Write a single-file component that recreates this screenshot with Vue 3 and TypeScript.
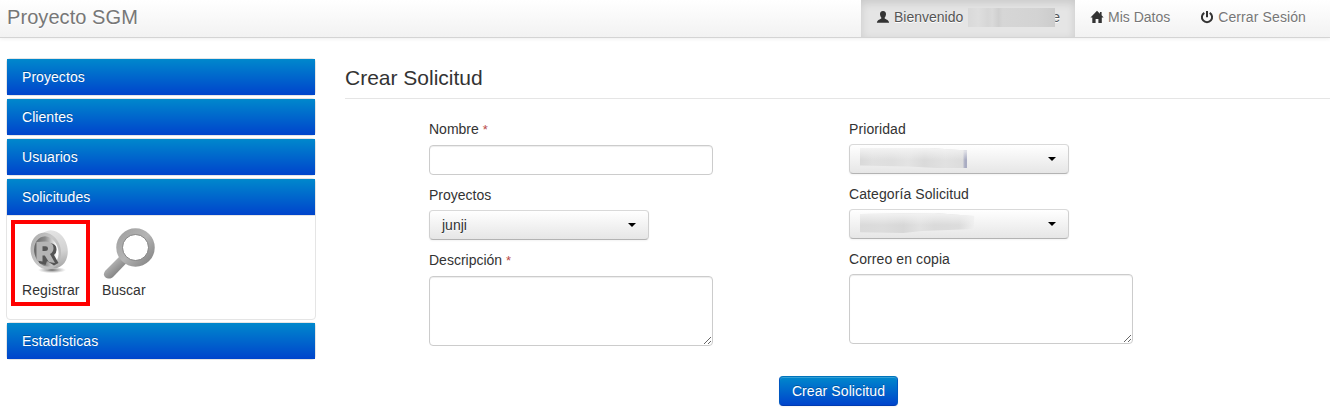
<script setup lang="ts">
const before: string[] = ['Proyectos', 'Clientes', 'Usuarios']
</script>

<template>
  <div class="page">
    <header class="navbar">
      <span class="brand">Proyecto SGM</span>
      <nav class="nav">
        <a class="nav-item active">
          <svg class="glyph" viewBox="0 0 14 14"><path d="M7 1C4.9 1 3.9 2.3 4 4.2C4.1 5.7 4.7 6.9 5.3 7.5V8.6C4.6 9.4 1.1 9.8.9 12.8H13.1C12.9 9.8 9.4 9.4 8.7 8.6V7.5C9.3 6.9 9.9 5.7 10 4.2C10.1 2.3 9.1 1 7 1Z" /></svg>
          <span>Bienvenido</span><span class="hidden-name"></span><span class="tail">e</span>
        </a>
        <a class="nav-item">
          <svg class="glyph" viewBox="0 0 14 14"><path d="M7 .8L.5 7.4H2.3V12.9H5.6V9H8.4V12.9H11.8V7.4H13.6L11.6 5.3V2H9.9V3.7Z" /></svg>
          <span>Mis Datos</span>
        </a>
        <a class="nav-item">
          <svg class="glyph" viewBox="0 0 14 14"><path d="M4.3 2.8A5.1 5.1 0 1 0 9.7 2.8" fill="none" stroke="#333" stroke-width="2" /><path d="M6 1H8V7.3H6Z" /></svg>
          <span class="logout">Cerrar Sesión</span>
        </a>
      </nav>
    </header>

    <div class="columns">
      <aside class="sidebar">
        <section v-for="name in before" :key="name" class="group">
          <h3 class="heading">{{ name }}</h3>
        </section>
        <section class="group">
          <h3 class="heading">Solicitudes</h3>
          <div class="panel">
            <a class="tool selected">
              <svg class="tool-icon" viewBox="0 0 50 50">
                <defs>
                  <linearGradient id="rim" x1="0" y1="0" x2="1" y2="1"><stop offset="0" stop-color="#a8a8a8" /><stop offset=".5" stop-color="#c8c8c8" /><stop offset="1" stop-color="#b4b4b4" /></linearGradient>
                  <linearGradient id="side" x1="0" y1="0" x2="0" y2="1"><stop offset="0" stop-color="#e4e4e4" /><stop offset=".6" stop-color="#d2d2d2" /><stop offset="1" stop-color="#a8a8a8" /></linearGradient>
                  <linearGradient id="well" x1="0" y1="0" x2="1" y2=".3"><stop offset="0" stop-color="#5c5c5c" /><stop offset=".55" stop-color="#8c8c8c" /><stop offset=".85" stop-color="#d5d5d5" /><stop offset="1" stop-color="#fff" /></linearGradient>
                  <radialGradient id="shade"><stop offset="0" stop-color="#666" /><stop offset="1" stop-color="#999" stop-opacity="0" /></radialGradient>
                </defs>
                <ellipse cx="27" cy="43" rx="14" ry="3.2" fill="url(#shade)" />
                <ellipse cx="27.5" cy="22.3" rx="15" ry="19.2" transform="rotate(-14 27.5 22.3)" fill="url(#side)" />
                <ellipse cx="20.8" cy="24" rx="15" ry="18.6" transform="rotate(-14 20.8 24)" fill="url(#rim)" />
                <ellipse cx="21.3" cy="24.4" rx="12" ry="15.2" transform="rotate(-14 21.3 24.4)" fill="url(#well)" />
                <path d="M14 17L25 16Q32 17 31.5 23Q31.5 26 29 28L33.5 36L29 38.5L22 34L20.5 38L14 36Z" fill="#555" />
                <path fill-rule="evenodd" d="M11.5 15L20.5 14.5Q28.5 15 28.5 21Q28.5 25 25 27L30 36L23.8 35L19.8 28.5H17.5V34.5L11.5 33.5ZM17.5 19.2V24H20Q23 24 23 21.5Q23 19.2 20.5 19.2Z" fill="#b4b4b4" />
              </svg>
              <span class="wide">Registrar</span>
            </a>
            <a class="tool search">
              <svg class="tool-icon" viewBox="0 0 52 52">
                <defs>
                  <linearGradient id="lens" x1="0" y1="0" x2="1" y2="1"><stop offset="0" stop-color="#a2a2a2" /><stop offset=".5" stop-color="#b4b4b4" /><stop offset="1" stop-color="#858585" /></linearGradient>
                  <linearGradient id="grip" gradientUnits="userSpaceOnUse" x1="9" y1="35" x2="17" y2="44"><stop offset="0" stop-color="#b5b5b5" /><stop offset="1" stop-color="#858585" /></linearGradient>
                </defs>
                <path d="M17 29L2.5 43.5C-.5 47 1 51 5 51.5C7.500 51.8 9 51 11 49L23.500 36Z" fill="url(#grip)" />
                <circle cx="32.500" cy="20.500" r="16" fill="none" stroke="url(#lens)" stroke-width="6.500" />
                <circle cx="32.500" cy="20.500" r="13" fill="none" stroke="#888" stroke-width="1" />
              </svg>
              <span>Buscar</span>
            </a>
          </div>
        </section>
        <section class="group">
          <h3 class="heading">Estadísticas</h3>
        </section>
      </aside>

      <main class="content">
        <h2 class="legend">Crear Solicitud</h2>
        <form class="form" @submit.prevent>
          <div class="col">
            <label class="label name">Nombre <span class="req">*</span></label>
            <input class="control" type="text" />
            <label class="label">Proyectos</label>
            <button type="button" class="select"><span>junji</span><i class="caret"></i></button>
            <label class="label name">Descripción <span class="req">*</span></label>
            <textarea class="control area"></textarea>
          </div>
          <div class="col">
            <label class="label wide">Prioridad</label>
            <button type="button" class="select"><span class="smudge first"></span><i class="caret"></i></button>
            <label class="label wide">Categoría Solicitud</label>
            <button type="button" class="select"><span class="smudge second"></span><i class="caret"></i></button>
            <label class="label wide">Correo en copia</label>
            <textarea class="control area"></textarea>
          </div>
        </form>
        <button type="button" class="submit">Crear Solicitud</button>
      </main>
    </div>
  </div>
</template>

<style>
body { margin: 0; background: #fff; overflow: hidden; }
</style>

<style scoped>
.page { height: 419px; overflow: hidden; font: 14px/20px "Liberation Sans", Arial, sans-serif; color: #333; }
.page * { box-sizing: border-box; }
.navbar { height: 38px; display: flex; justify-content: space-between; padding: 0 9px 0 7px; border-bottom: 1px solid #d4d4d4; background: linear-gradient(#fff, #f2f2f2); box-shadow: 0 1px 4px rgba(0, 0, 0, .065); }
.brand { font-size: 20px; line-height: 20px; padding-top: 7px; color: #777; letter-spacing: .07px; text-shadow: 0 1px 0 #fff; }
.nav { display: flex; }
.nav-item { display: flex; padding: 7px 15px 10px; color: #777; text-shadow: 0 1px 0 #fff; white-space: nowrap; }
.nav-item.active { width: 214px; color: #555; background: #e5e5e5; box-shadow: inset 0 3px 8px rgba(0, 0, 0, .125); }
.glyph { width: 14px; height: 14px; margin: 3px 4px 0 0; fill: #333; flex: none; }
.logout { letter-spacing: .11px; }
.hidden-name { width: 87px; height: 19px; margin: 1px 0 0 5px; flex: none; background: linear-gradient(90deg, #d9d9d9, #dedede 12%, #d6d6d6 23%, #dadada 28%, #cfcfcf 35%, #d6d6d6 40%, #d3d3d3 80%, #cccccc); }
.tail { margin-left: -3px; clip-path: inset(0 0 0 3px); }
.columns { display: flex; padding: 20px 0 0 6px; }
.sidebar { width: 310px; flex: none; }
.group { border: 1px solid #e5e5e5; border-radius: 4px; margin-bottom: 2px; }
.heading { margin: 0; height: 36px; padding: 8px 15px; font: inherit; letter-spacing: .06px; color: #fff; text-shadow: 0 -1px 0 rgba(0, 0, 0, .25); background: linear-gradient(#08c, #04c); }
.panel { height: 104px; border-top: 1px solid #e5e5e5; padding: 4px; display: flex; }
.tool { display: flex; flex-direction: column; height: 86px; }
.wide { letter-spacing: .09px; }
.tool.selected { width: 79px; border: 4px solid #f00; padding: 0 7px; }
.selected .tool-icon { width: 50px; height: 50px; margin: 3px 0 3px 3px; }
.search { padding-left: 12px; }
.search .tool-icon { width: 52px; height: 52px; margin: 7px 0 1px 1px; }
.content { flex: 1; margin-left: 29px; display: flex; flex-direction: column; }
.legend { margin: 0; height: 41px; font-size: 21px; line-height: 40px; font-weight: normal; border-bottom: 1px solid #e5e5e5; }
.form { display: flex; gap: 136px; padding: 20px 0 0 84px; }
.col { width: 284px; display: flex; flex-direction: column; }
.label { height: 25px; }
.label.name { height: 26px; }
.req { color: #b94a48; font-size: 13px; }
.control { width: 284px; height: 30px; margin: 0 0 10px; padding: 4px 6px; border: 1px solid #ccc; border-radius: 4px; background: #fff; box-shadow: inset 0 1px 1px rgba(0, 0, 0, .075); }
.area { height: 70px; margin: 0; display: block; }
.select { width: 220px; height: 30px; margin: 0 0 10px; padding: 0 12px; display: flex; align-items: center; justify-content: space-between; font: inherit; color: #333; text-shadow: 0 1px 1px rgba(255, 255, 255, .75); border: 1px solid #ccc; border-color: #d9d9d9 #d0d0d0 #b3b3b3; border-radius: 4px; background: linear-gradient(#fff, #e6e6e6); box-shadow: inset 0 1px 0 rgba(255, 255, 255, .2), 0 1px 2px rgba(0, 0, 0, .05); }
.caret { border-top: 4px solid #000; border-left: 4px solid transparent; border-right: 4px solid transparent; }
.smudge { height: 20px; margin: -2px 0 0 -2px; }
.first { width: 107px; clip-path: polygon(0 0, 65% 0, 100% 12%, 100% 100%, 72% 100%, 45% 92%, 0 88%); background: linear-gradient(#f3f3f3, rgba(243, 243, 243, 0) 60%), linear-gradient(90deg, #d9d9d9, #e0e0e0 12%, #dedede 30%, #e3e3e3 45%, #dadada 60%, #e1e1e1 80%, #dcdcdc 96%, #a9acc2 98%); }
.second { width: 124px; clip-path: polygon(0 5%, 60% 0, 92% 15%, 92% 80%, 50% 90%, 35% 100%, 0 96%); background: linear-gradient(#f3f3f3, rgba(243, 243, 243, 0) 60%), linear-gradient(90deg, #dadada, #dcdcdc 18%, #d7d7d7 35%, #e1e1e1 48%, #dadada 60%, #dcdcdc 80%, #efefef 92%); }
.submit { width: 119px; height: 30px; margin: 30px 0 0 434px; padding: 0; font: inherit; letter-spacing: .09px; color: #fff; text-shadow: 0 -1px 0 rgba(0, 0, 0, .25); border: 1px solid; border-color: #0074bb #0057c0 #003bb0; border-radius: 4px; background: linear-gradient(#08c, #04c); box-shadow: inset 0 1px 0 rgba(255, 255, 255, .2), 0 1px 2px rgba(0, 0, 0, .05); }
</style>
